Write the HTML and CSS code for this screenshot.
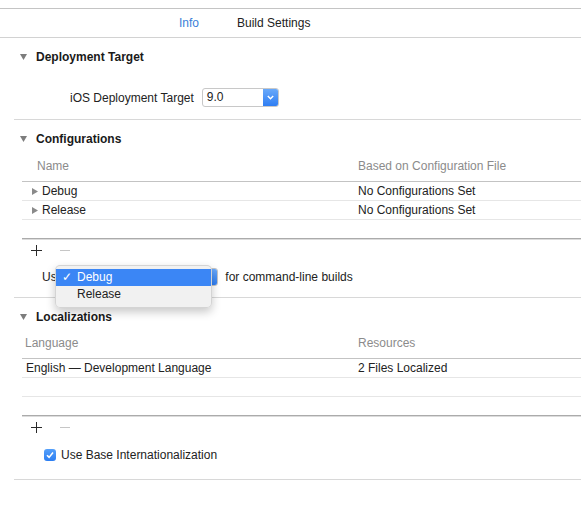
FILE: index.html
```html
<!DOCTYPE html>
<html>
<head>
<meta charset="utf-8">
<link rel="stylesheet" href="styles.css">
</head>
<body>
<div class="titlebar"></div>
<nav class="tabs">
  <span class="tab active">Info</span>
  <span class="tab">Build Settings</span>
</nav>

<section class="section">
  <div class="sec-head">
    <svg class="disclose" viewBox="0 0 7 6"><polygon points="0,0 7,0 3.5,6"/></svg>
    <span>Deployment Target</span>
  </div>
  <div class="field-row">
    <span class="field-label">iOS Deployment Target</span>
    <div class="combo">
      <span class="combo-value">9.0</span>
      <span class="combo-btn"><svg width="7" height="5" viewBox="0 0 7 5"><path d="M0.8 1 L3.5 3.8 L6.2 1" stroke="#fff" stroke-width="1.4" fill="none"/></svg></span>
    </div>
  </div>
</section>

<section class="section">
  <div class="sec-head">
    <svg class="disclose" viewBox="0 0 7 6"><polygon points="0,0 7,0 3.5,6"/></svg>
    <span>Configurations</span>
  </div>
  <div class="table config">
    <div class="thead"><span class="c1">Name</span><span class="c2">Based on Configuration File</span></div>
    <div class="trow"><span class="c1"><svg class="rtri" viewBox="0 0 6 7"><polygon points="0,0 6,3.5 0,7"/></svg>Debug</span><span class="c2">No Configurations Set</span></div>
    <div class="trow"><span class="c1"><svg class="rtri" viewBox="0 0 6 7"><polygon points="0,0 6,3.5 0,7"/></svg>Release</span><span class="c2">No Configurations Set</span></div>
    <div class="trow empty"></div>
  </div>
  <div class="pm-row">
    <svg width="11" height="11" viewBox="0 0 11 11"><path d="M5.5 0V11M0 5.5H11" stroke="#2a2a2a" stroke-width="1"/></svg>
    <svg width="11" height="11" viewBox="0 0 11 11"><path d="M0 5.5H10" stroke="#c6c6c6" stroke-width="1"/></svg>
  </div>
  <div class="use-row">
    <span>Use</span>
    <div class="popup">
      <span class="popup-btn"><svg width="5" height="9" viewBox="0 0 5 9"><path d="M0.8 3.2 L2.5 1.2 L4.2 3.2 M0.8 5.8 L2.5 7.8 L4.2 5.8" stroke="#fff" fill="none" stroke-width="1.1"/></svg></span>
    </div>
    <span>for command-line builds</span>
    <div class="menu">
      <div class="menu-item selected"><span class="check">✓</span>Debug</div>
      <div class="menu-item"><span class="check"></span>Release</div>
    </div>
  </div>
</section>

<section class="section">
  <div class="sec-head">
    <svg class="disclose" viewBox="0 0 7 6"><polygon points="0,0 7,0 3.5,6"/></svg>
    <span>Localizations</span>
  </div>
  <div class="table loc">
    <div class="thead"><span class="c1">Language</span><span class="c2">Resources</span></div>
    <div class="trow"><span class="c1">English — Development Language</span><span class="c2">2 Files Localized</span></div>
    <div class="trow"></div>
    <div class="trow empty"></div>
  </div>
  <div class="pm-row">
    <svg width="11" height="11" viewBox="0 0 11 11"><path d="M5.5 0V11M0 5.5H11" stroke="#2a2a2a" stroke-width="1"/></svg>
    <svg width="11" height="11" viewBox="0 0 11 11"><path d="M0 5.5H10" stroke="#c6c6c6" stroke-width="1"/></svg>
  </div>
  <div class="check-row">
    <span class="checkbox"><svg width="12" height="12" viewBox="0 0 12 12"><path d="M3 6.2 L5.1 8.4 L9 3.6" stroke="#fff" stroke-width="1.6" fill="none"/></svg></span>
    <span>Use Base Internationalization</span>
  </div>
</section>
</body>
</html>
```

FILE: styles.css
```css
* { box-sizing: border-box; }

body {
  margin: 0;
  background: #fff;
  font-family: "Liberation Sans", Arial, sans-serif;
  font-size: 12px;
  color: #222;
}

.titlebar {
  height: 9px;
  border-bottom: 1px solid #c4c4c4;
}

.tabs {
  height: 29px;
  border-bottom: 1px solid #d2d2d2;
  display: flex;
  align-items: center;
  padding-left: 179px;
  gap: 38px;
}

.tab.active { color: #3b7fd8; }

.section {
  margin-left: 14px;
  border-bottom: 1px solid #d8d8d8;
}

.sec-head {
  height: 38px;
  display: flex;
  align-items: center;
  padding-left: 6px;
  gap: 9px;
  font-weight: bold;
  color: #1a1a1a;
}

.disclose {
  width: 7px;
  height: 6px;
  fill: #7d7d7d;
}

.field-row {
  height: 43px;
  display: flex;
  align-items: center;
  padding-left: 56px;
  gap: 8px;
}

.combo {
  display: flex;
  width: 77px;
  height: 19px;
  border: 1px solid #c8c8c8;
  border-radius: 3px;
  overflow: hidden;
  background: #fff;
}

.combo-value {
  flex: 1;
  padding-left: 4px;
  line-height: 17px;
}

.combo-btn {
  width: 15px;
  background: linear-gradient(#69a9fa, #2f7ef3);
  display: flex;
  align-items: center;
  justify-content: center;
}

.table {
  margin-left: 8px;
  border-bottom: 1px solid #ababab;
  box-shadow: 0 1px 0 #dcdcdc;
}

.thead {
  height: 24px;
  display: grid;
  grid-template-columns: 336px 1fr;
  border-bottom: 1px solid #c3c3c3;
  color: #8b8b8b;
  line-height: 16px;
}

.trow {
  height: 19px;
  display: grid;
  grid-template-columns: 336px 1fr;
  align-items: center;
  border-bottom: 1px solid #e6e6e6;
}

.trow.empty {
  height: 18px;
  border-bottom: none;
}

.config .thead .c1 { padding-left: 15px; }
.config .trow .c1 {
  padding-left: 10px;
  display: flex;
  align-items: center;
  gap: 4px;
}

.rtri {
  width: 6px;
  height: 7px;
  fill: #8a8a8a;
}

.loc .thead {
  height: 23px;
  line-height: 14px;
}
.loc .thead .c1 { padding-left: 3px; }
.loc .trow .c1 { padding-left: 4px; }

.pm-row {
  height: 22px;
  display: flex;
  align-items: center;
  padding-left: 17px;
  gap: 18px;
}

.use-row {
  position: relative;
  height: 36px;
  padding: 0 0 4px 28px;
  display: flex;
  align-items: center;
  gap: 4px;
}

.popup {
  width: 151px;
  height: 18px;
  margin-right: 3px;
  border: 1px solid #c5c5c5;
  border-radius: 3px;
  background: #fff;
  display: flex;
  justify-content: flex-end;
  overflow: hidden;
}

.popup-btn {
  width: 15px;
  background: linear-gradient(#69a9fa, #2f7ef3);
  display: flex;
  align-items: center;
  justify-content: center;
}

.menu {
  position: absolute;
  left: 41px;
  top: 4px;
  width: 157px;
  padding: 3px 0 4px;
  background: rgba(241, 241, 241, 0.98);
  border: 1px solid rgba(0, 0, 0, 0.12);
  border-radius: 5px;
  box-shadow: 0 4px 10px rgba(0, 0, 0, 0.22);
}

.menu-item {
  height: 17px;
  line-height: 16px;
  display: flex;
  color: #222;
}

.menu-item.selected {
  background: #3b86f5;
  color: #fff;
}

.check {
  width: 15px;
  margin-left: 6px;
}

.check-row {
  height: 41px;
  padding: 0 0 7px 30px;
  display: flex;
  align-items: center;
  gap: 5px;
}

.checkbox {
  width: 12px;
  height: 12px;
  border-radius: 3px;
  background: linear-gradient(#55a0fa, #2c7ef2);
  display: flex;
}
```
